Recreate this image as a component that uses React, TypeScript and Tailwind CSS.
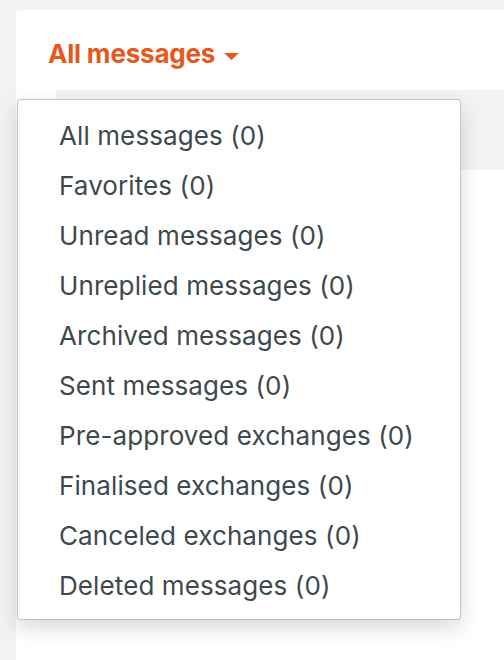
import React from "react";

const items = [
  "All messages (0)",
  "Favorites (0)",
  "Unread messages (0)",
  "Unreplied messages (0)",
  "Archived messages (0)",
  "Sent messages (0)",
  "Pre-approved exchanges (0)",
  "Finalised exchanges (0)",
  "Canceled exchanges (0)",
  "Deleted messages (0)",
];

export default function App() {
  return (
    <div
      className="w-[504px] h-[660px] overflow-hidden bg-[#f2f2f2] pt-[10px] pl-[16px]"
      style={{ fontFamily: "Inter, 'Noto Sans', sans-serif" }}
    >
      <div className="relative bg-white h-[700px] rounded-tl-[3px]">
        <div className="pl-[32px] pt-[28px] h-[80px]">
          <button className="flex items-center gap-[9px] text-[#e8581c] font-bold text-[26px] leading-[32px] tracking-[-0.2px]">
            All messages
            <svg width="15" height="7" viewBox="0 0 15 7" className="mt-[4px]">
              <polygon points="0,0 15,0 7.5,7" fill="#e8581c" />
            </svg>
          </button>
        </div>
        <div className="ml-[40px] h-[80px] bg-[#f2f2f2]" />
        <div className="absolute left-[1px] top-[89px] w-[444px] h-[521px] bg-white border border-[#c4c4c4] rounded-[3px] shadow-[0_8px_20px_rgba(0,0,0,0.15)] pt-[10px]">
          {items.map((t) => (
            <div
              key={t}
              className="h-[50px] flex items-center pl-[41px] text-[26px] tracking-[0.1px] text-[#3e494e]"
            >
              {t}
            </div>
          ))}
        </div>
      </div>
    </div>
  );
}
